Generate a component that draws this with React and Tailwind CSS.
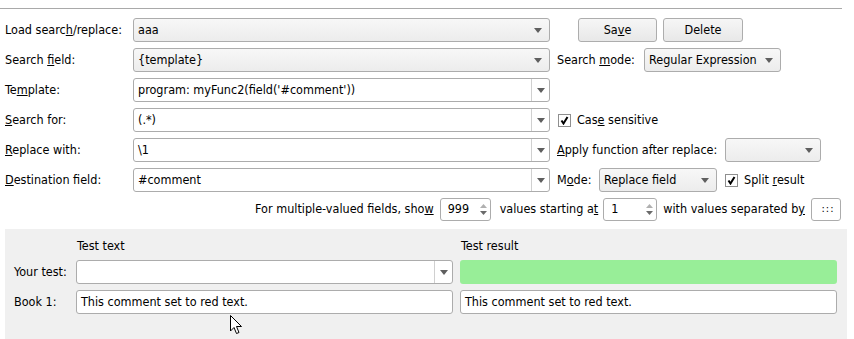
import React from 'react';

const Arrow = () => (
  <svg width="8" height="5" viewBox="0 0 8 5">
    <path d="M0 0h8L4 5z" fill="#5f5f5f" />
  </svg>
);

const Combo = ({ children, className = '', editable = false }) => (
  <div
    className={`flex h-full items-center rounded-[3px] border border-[#acacac] ${
      editable ? 'bg-white' : 'bg-gradient-to-b from-[#f7f7f7] to-[#ececec]'
    } ${className}`}
  >
    <span className="flex-1 truncate pl-[4px]">{children}</span>
    {editable ? (
      <span className="flex h-full w-[18px] items-center justify-center border-l border-[#d0d0d0]">
        <Arrow />
      </span>
    ) : (
      <span className="flex w-[22px] items-center justify-center">
        <Arrow />
      </span>
    )}
  </div>
);

const Button = ({ children, className = '' }) => (
  <div
    className={`flex h-full items-center justify-center rounded-[3px] border border-[#adadad] bg-gradient-to-b from-[#f6f6f6] to-[#e8e8e8] ${className}`}
  >
    {children}
  </div>
);

const Check = ({ className = '' }) => (
  <div
    className={`flex h-[13px] w-[13px] items-center justify-center border border-[#8f8f8f] bg-white ${className}`}
  >
    <svg width="9" height="9" viewBox="0 0 9 9">
      <path d="M1.5 4.5 L3.5 7.5 L7.5 1" fill="none" stroke="#000" strokeWidth="2" />
    </svg>
  </div>
);

const Spin = ({ value, className = '' }) => (
  <div
    className={`flex h-full items-center rounded-[3px] border border-[#acacac] bg-white ${className}`}
  >
    <span className="flex-1 pl-[7px]">{value}</span>
    <span className="flex h-full w-[13px] flex-col items-center justify-center gap-[3px]">
      <svg width="7" height="4" viewBox="0 0 7 4">
        <path d="M0 4h7L3.5 0z" fill="#b0b0b0" />
      </svg>
      <svg width="7" height="4" viewBox="0 0 7 4">
        <path d="M0 0h7L3.5 4z" fill="#6a6a6a" />
      </svg>
    </span>
  </div>
);

const Field = ({ children, className = '' }) => (
  <div
    className={`flex h-full items-center rounded-[3px] border border-[#acacac] bg-white pl-[4px] ${className}`}
  >
    {children}
  </div>
);

const Label = ({ children, className = '' }) => (
  <div className={`shrink-0 whitespace-nowrap ${className}`}>{children}</div>
);

export default function App() {
  return (
    <div className="relative flex h-[339px] w-[854px] flex-col overflow-hidden bg-white font-['DejaVu_Sans_Condensed','DejaVu_Sans',sans-serif] text-[12.5px] text-black">
      <div className="pt-[8px]">
        <div className="h-px w-[842px] bg-[#a9a9a9]" />
      </div>

      <div className="flex flex-col gap-[6px] px-[5px] pt-[9px]">
        {/* Load */}
        <div className="flex h-[24px] items-center">
          <Label className="w-[128px]">
            Load searc<u>h</u>/replace:
          </Label>
          <Combo className="w-[417px]">aaa</Combo>
          <Button className="ml-[28px] w-[79px]">
            Sa<u>v</u>e
          </Button>
          <Button className="ml-[6px] w-[80px]">Delete</Button>
        </div>

        {/* Search field */}
        <div className="flex h-[24px] items-center">
          <Label className="w-[128px]">
            Search <u>f</u>ield:
          </Label>
          <Combo className="w-[417px]">{'{template}'}</Combo>
          <Label className="ml-[7px] w-[87px]">
            Search <u>m</u>ode:
          </Label>
          <Combo className="w-[137px]">Regular Expression</Combo>
        </div>

        {/* Template */}
        <div className="flex h-[24px] items-center">
          <Label className="w-[128px]">
            Te<u>m</u>plate:
          </Label>
          <Combo editable className="w-[417px]">
            program: myFunc2(field('#comment'))
          </Combo>
        </div>

        {/* Search for */}
        <div className="flex h-[24px] items-center">
          <Label className="w-[128px]">
            <u>S</u>earch for:
          </Label>
          <Combo editable className="w-[417px]">
            (.*)
          </Combo>
          <Check className="ml-[8px]" />
          <Label className="ml-[6px]">
            Cas<u>e</u> sensitive
          </Label>
        </div>

        {/* Replace with */}
        <div className="flex h-[24px] items-center">
          <Label className="w-[128px]">
            <u>R</u>eplace with:
          </Label>
          <Combo editable className="w-[417px]">
            \1
          </Combo>
          <Label className="ml-[7px] w-[168px]">
            <u>A</u>pply function after replace:
          </Label>
          <Combo className="w-[96px]" />
        </div>

        {/* Destination */}
        <div className="flex h-[24px] items-center">
          <Label className="w-[128px]">
            <u>D</u>estination field:
          </Label>
          <Combo editable className="w-[417px]">
            #comment
          </Combo>
          <Label className="ml-[7px] w-[42px]">
            M<u>o</u>de:
          </Label>
          <Combo className="w-[118px]">Replace field</Combo>
          <Check className="ml-[8px]" />
          <Label className="ml-[6px]">
            Split <u>r</u>esult
          </Label>
        </div>

        {/* Multiple values */}
        <div className="flex h-[23px] items-center justify-end pr-[8px]">
          <Label>
            For multiple-valued fields, sho<u>w</u>
          </Label>
          <Spin className="ml-[6px] w-[51px]" value="999" />
          <Label className="ml-[9px]">
            values starting a<u>t</u>
          </Label>
          <Spin className="ml-[5px] w-[54px]" value="1" />
          <Label className="ml-[6px]">
            with values separated b<u>y</u>
          </Label>
          <Field className="ml-[6px] w-[30px] justify-center pl-0 text-[11px] tracking-[1px]">
            :::
          </Field>
        </div>
      </div>

      {/* Test panel */}
      <div className="ml-[5px] mt-[8px] flex w-[842px] flex-1 flex-col gap-[6px] bg-[#f0f0f0] pl-[9px] pt-[9px]">
        <div className="flex h-[16px] items-center">
          <div className="w-[62px]" />
          <div className="w-[377px] pl-[1px]">Test text</div>
          <div className="ml-[7px] w-[377px] pl-[1px]">Test result</div>
        </div>
        <div className="flex h-[24px] items-center">
          <Label className="w-[62px]">Your test:</Label>
          <Combo editable className="w-[377px]" />
          <div className="ml-[7px] h-full w-[377px] rounded-[3px] bg-[#98ee98]" />
        </div>
        <div className="flex h-[24px] items-center">
          <Label className="w-[62px]">Book 1:</Label>
          <Field className="w-[377px]">This comment set to red text.</Field>
          <Field className="ml-[7px] w-[377px]">This comment set to red text.</Field>
        </div>
      </div>

      {/* mouse pointer */}
      <svg
        className="absolute left-[230px] top-[315px]"
        width="13"
        height="20"
        viewBox="0 0 13 20"
      >
        <path
          d="M0.5 0.5 L0.5 16 L4 12.5 L6.5 18.5 L9 17.5 L6.5 11.5 L11.5 11.5 Z"
          fill="#fff"
          stroke="#000"
          strokeWidth="1"
          strokeLinejoin="round"
        />
      </svg>
    </div>
  );
}
